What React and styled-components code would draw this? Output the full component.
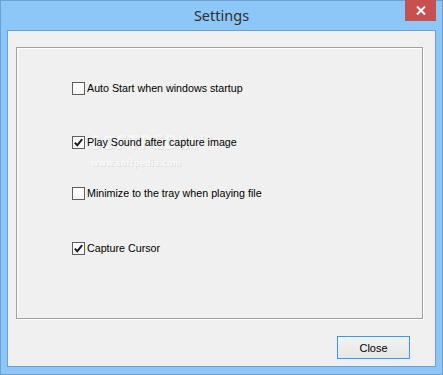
import React from "react";
import styled, { createGlobalStyle } from "styled-components";

const Global = createGlobalStyle`
  html, body { margin: 0; padding: 0; background: #8cc7f8; }
  body { font-family: "Liberation Sans", Arial, sans-serif; }
  * { box-sizing: border-box; }
`;

const Window = styled.div`
  position: relative;
  width: 443px;
  height: 375px;
  border: 1px solid #6f9fd2;
  background: #8cc7f8;
  display: flex;
  flex-direction: column;
`;

const TitleBar = styled.div`
  height: 29px;
  display: flex;
  align-items: center;
  justify-content: center;
  padding-bottom: 1px;
  font-family: "Noto Sans", "Open Sans", sans-serif;
  font-size: 14.5px;
  color: #2e2e2e;
`;

const CloseCaption = styled.div`
  position: absolute;
  top: -1px;
  right: 6px;
  width: 31px;
  height: 21px;
  background: #c75050;
  display: flex;
  align-items: center;
  justify-content: center;
`;

const Client = styled.div`
  margin: 0 6px;
  height: 337px;
  border: 1px solid #6fa0d3;
  background: #f0f0f0;
  display: flex;
  flex-direction: column;
`;

const GroupBox = styled.div`
  position: relative;
  margin: 16px 0 0 8px;
  width: 407px;
  height: 272px;
  border: 1px solid #a0a0a0;
  box-shadow: 1px 1px 0 #ffffff, inset 1px 1px 0 #ffffff;
  display: flex;
  flex-direction: column;
  padding-left: 55px;
`;

const Row = styled.label`
  position: relative;
  display: flex;
  align-items: center;
  height: 13px;
  margin-top: ${(p) => p.$gap}px;
  font-size: 10.7px;
  color: #000;
  gap: 2px;
`;

const Box = styled.span`
  width: 13px;
  height: 13px;
  border: 1px solid #5e5e5e;
  background: linear-gradient(#ffffff, #f4f4f4);
  display: flex;
  align-items: center;
  justify-content: center;
  flex: none;
`;

const LabelText = styled.span`
  line-height: 13px;
  white-space: nowrap;
`;

const Watermark = styled.div`
  position: absolute;
  left: 72px;
  top: 82px;
  display: flex;
  flex-direction: column;
  align-items: flex-start;
  pointer-events: none;
`;

const WatermarkBig = styled.span`
  font-family: "DejaVu Sans Condensed", "DejaVu Sans", sans-serif;
  font-stretch: condensed;
  font-weight: bold;
  font-size: 19px;
  line-height: 24px;
  letter-spacing: 0px;
  color: #f6f6f6;
  text-shadow: 1px 1px 0 #e2e2e2, -1px 0 0 #e8e8e8;
`;

const WatermarkSmall = styled.span`
  font-family: "DejaVu Sans Condensed", "DejaVu Sans", sans-serif;
  font-stretch: condensed;
  font-weight: bold;
  font-size: 9px;
  line-height: 10px;
  margin-top: 4px;
  margin-left: 2px;
  color: #f8f8f8;
  text-shadow: 1px 1px 0 #e0e0e0;
`;

const Footer = styled.div`
  display: flex;
  margin-top: 17px;
  padding-left: 329px;
`;

const Button = styled.button`
  width: 73px;
  height: 23px;
  border: 1px solid #3399ff;
  background: linear-gradient(#f2f2f2, #e6e6e6);
  font-family: "Liberation Sans", Arial, sans-serif;
  font-size: 11px;
  color: #000;
  padding: 0;
  margin: 0;
`;

const Check = () => (
  <svg width="9" height="9" viewBox="0 0 9 9">
    <path d="M0.8 4.6 L3.3 7.2 L8.2 1.2" fill="none" stroke="#1a1a1a" strokeWidth="1.9" />
  </svg>
);

const options = [
  { text: "Auto Start when windows startup", checked: false, gap: 34 },
  { text: "Play Sound after capture image", checked: true, gap: 41 },
  { text: "Minimize to the tray when playing file", checked: false, gap: 38 },
  { text: "Capture Cursor", checked: true, gap: 42 },
];

export default function App() {
  return (
    <>
      <Global />
      <Window>
        <TitleBar>Settings</TitleBar>
        <CloseCaption>
          <svg width="10" height="9" viewBox="0 0 10 9">
            <path d="M1 0.5 L9 8.5 M9 0.5 L1 8.5" stroke="#fff" strokeWidth="2" />
          </svg>
        </CloseCaption>
        <Client>
          <GroupBox>
            <Watermark>
              <WatermarkBig>SOFTPEDIA™</WatermarkBig>
              <WatermarkSmall>www.softpedia.com</WatermarkSmall>
            </Watermark>
            {options.map((o) => (
              <Row key={o.text} $gap={o.gap}>
                <Box>{o.checked && <Check />}</Box>
                <LabelText>{o.text}</LabelText>
              </Row>
            ))}
          </GroupBox>
          <Footer>
            <Button>Close</Button>
          </Footer>
        </Client>
      </Window>
    </>
  );
}
